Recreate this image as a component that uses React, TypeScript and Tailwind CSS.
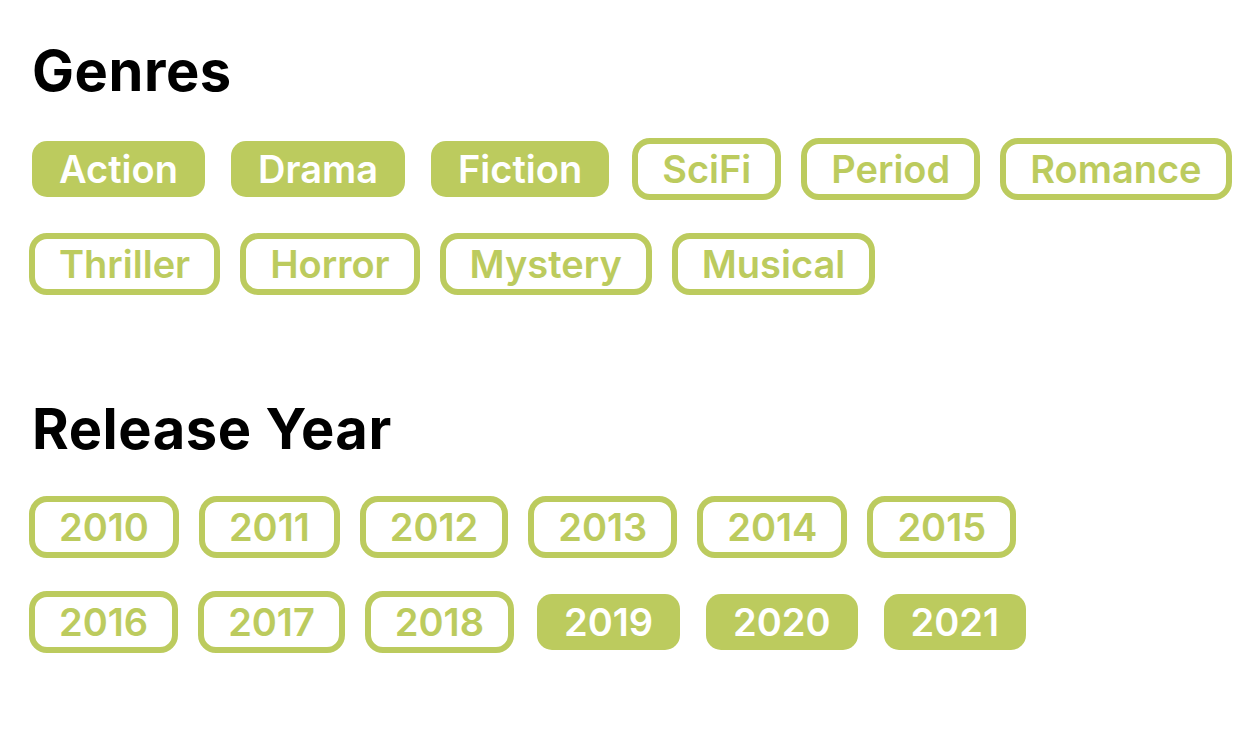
import { useState } from 'react';

const genreRows = [
    ['Action', 'Drama', 'Fiction', 'SciFi', 'Period', 'Romance'],
    ['Thriller', 'Horror', 'Mystery', 'Musical'],
];

const yearRows = [
    ['2010', '2011', '2012', '2013', '2014', '2015'],
    ['2016', '2017', '2018', '2019', '2020', '2021'],
];

function Pill({ label, active, onToggle }: { label: string; active: boolean; onToggle: () => void }) {
    return (
        <button
            onClick={onToggle}
            className={
                active
                    ? 'm-[3px] rounded-[15px] bg-[#bccb5e] px-[27px] py-[8px] text-[38px] leading-[40px] font-semibold text-white'
                    : 'rounded-[18px] border-[6px] border-[#bccb5e] bg-white px-[24px] py-[5px] text-[38px] leading-[40px] font-semibold text-[#bccb5e]'
            }
        >
            {label}
        </button>
    );
}

function FilterGroup({
    title,
    rows,
    selected,
    onToggle,
}: {
    title: string;
    rows: string[][];
    selected: string[];
    onToggle: (v: string) => void;
}) {
    return (
        <section>
            <h2 className="text-[56px] leading-[56px] font-bold tracking-[0.01em] text-black">{title}</h2>
            <div className="mt-[39px] -ml-[3px] flex flex-col gap-y-[33px]">
                {rows.map((row, i) => (
                    <div key={i} className="flex items-center gap-x-[20px]">
                        {row.map((item) => (
                            <Pill key={item} label={item} active={selected.includes(item)} onToggle={() => onToggle(item)} />
                        ))}
                    </div>
                ))}
            </div>
        </section>
    );
}

export default function App() {
    const [genres, setGenres] = useState<string[]>(['Action', 'Drama', 'Fiction']);
    const [years, setYears] = useState<string[]>(['2019', '2020', '2021']);

    const toggle = (list: string[], set: (v: string[]) => void) => (v: string) =>
        set(list.includes(v) ? list.filter((x) => x !== v) : [...list, v]);

    return (
        <div className="min-h-screen bg-white px-[32px] pt-[43px]" style={{ fontFamily: 'Inter, "Noto Sans", sans-serif' }}>
            <FilterGroup title="Genres" rows={genreRows} selected={genres} onToggle={toggle(genres, setGenres)} />
            <div className="h-[106px]" />
            <FilterGroup title="Release Year" rows={yearRows} selected={years} onToggle={toggle(years, setYears)} />
        </div>
    );
}
